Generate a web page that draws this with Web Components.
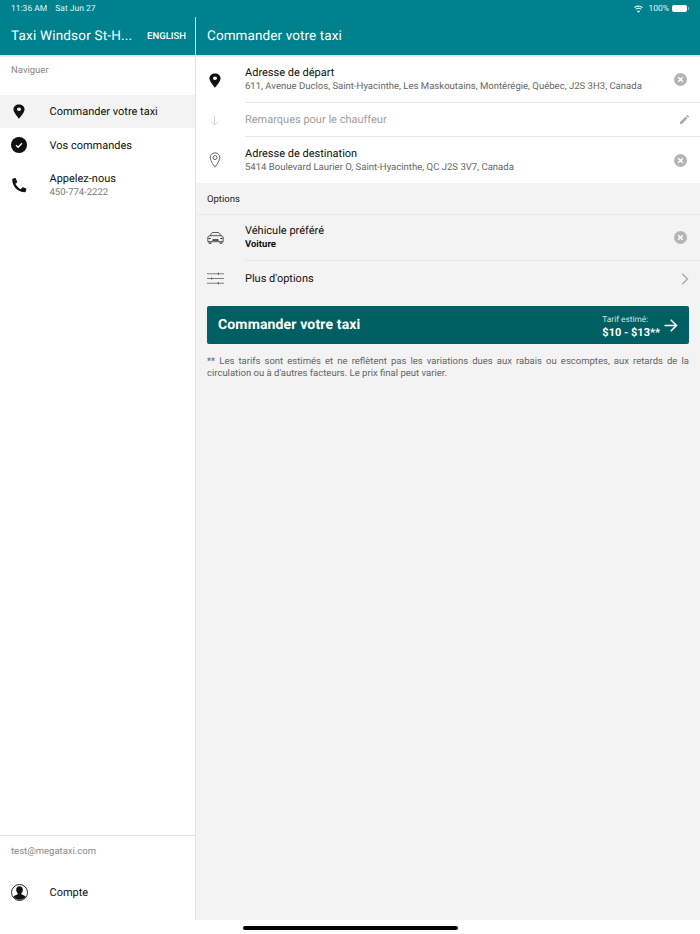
<!DOCTYPE html>
<html lang="fr">
<head>
<meta charset="utf-8">
<title>Commander votre taxi</title>
<style>
    html, body {
        margin: 0;
        height: 100%;
        background: #fff;
        font-family: Roboto, "Liberation Sans", sans-serif;
        text-rendering: geometricPrecision;
    }
</style>
</head>
<body>
<taxi-app></taxi-app>

<template id="taxi-icons">
    <svg data-icon="pin-solid" viewBox="0 0 14 20" preserveAspectRatio="none"><path fill="currentColor" fill-rule="evenodd" d="M7 .5C3.300 .5.500 3.300.500 6.900c0 4.600 6.500 12.600 6.500 12.600s6.500-8 6.500-12.600C13.500 3.300 10.700.5 7 .5zm0 8.800a2.400 2.400 0 1 1 0-4.800 2.400 2.400 0 0 1 0 4.800z"/></svg>
    <svg data-icon="pin-line" viewBox="0 0 14 20"><path fill="none" stroke="currentColor" stroke-width="1" d="M7 1C3.700 1 1 3.600 1 6.900c0 4 6 12 6 12s6-8 6-12C13 3.600 10.300 1 7 1z"/><circle cx="7" cy="7" r="2.500" fill="none" stroke="currentColor" stroke-width="1"/></svg>
    <svg data-icon="check" viewBox="0 0 16 16"><circle cx="8" cy="8" r="8" fill="currentColor"/><path fill="none" stroke="#fff" stroke-width="1.300" d="M5 8.300l2.100 2L11 6.200"/></svg>
    <svg data-icon="phone" viewBox="0 0 16 16"><path fill="currentColor" d="M3.200 .6L.7 1.300C.4 1.400.2 1.700.2 2c.1 3.600 1.500 7 3.900 9.600 2.600 2.500 6 3.900 9.800 4.100.3 0 .6-.2.700-.5l.7-2.600c.1-.3-.1-.7-.4-.8l-3.200-1.300c-.3-.1-.6 0-.8.200l-1.500 1.700C7 11.300 4.700 9 3.600 6.700l1.700-1.400c.2-.2.300-.5.200-.8L4.100 1c-.1-.3-.5-.5-.9-.4z"/></svg>
    <svg data-icon="account" viewBox="0 0 17 17"><circle cx="8.500" cy="8.500" r="8" fill="none" stroke="currentColor" stroke-width=".9"/><path fill="currentColor" d="M8.500 2.300c-2 0-3.300 1.500-3.300 3.500 0 1.400.5 2.700 1.500 3.500v1l-3.300 1.400c-.5.300-.8.600-1 1a7.500 7.500 0 0 0 12.200 0c-.2-.4-.5-.7-1-1l-3.300-1.400v-1c1-.8 1.500-2.100 1.500-3.500 0-2-1.300-3.500-3.300-3.500z"/></svg>
    <svg data-icon="down" viewBox="0 0 10 12"><path fill="none" stroke="currentColor" stroke-width=".9" d="M5 .5v10.500M1.200 7.200L5 11l3.800-3.800"/></svg>
    <svg data-icon="clear" viewBox="0 0 13 13"><circle cx="6.500" cy="6.500" r="6.500" fill="currentColor"/><path fill="none" stroke="#fff" stroke-width="1.500" d="M4.200 4.200l4.600 4.600M8.800 4.200L4.200 8.800"/></svg>
    <svg data-icon="pencil" viewBox="0 0 10 10"><path fill="currentColor" d="M0 10V7.900L6.200 1.700l2.100 2.100L2.100 10zM6.900 1l.8-.8c.3-.3.700-.3 1 0l1.100 1.100c.3.300.3.700 0 1l-.8.800z"/></svg>
    <svg data-icon="car" viewBox="0 0 18 13"><g fill="none" stroke="currentColor" stroke-width=".8"><path d="M.7 5.700c0-.7.500-1.100 1.200-1.300l1.300-.4L4.600 1.500C5 .9 5.500.6 6.200.6h5.600c.7 0 1.200.3 1.600.9L14.800 4l1.300.4c.7.200 1.200.6 1.200 1.300v4.800H.7z"/><path d="M3.200 4h11.600M2 10.500v1.900h2.200v-1.900M13.800 10.500v1.900H16v-1.900"/></g><path fill="currentColor" d="M6 7.800h6l.6 1.600H5.400zM1.500 6.200l2.300.6v.7H1.500zM16.500 6.200l-2.300.6v.7h2.300z"/></svg>
    <svg data-icon="sliders" viewBox="0 0 18 13"><g fill="none" stroke="currentColor" stroke-width=".7"><path d="M0 1.500h18M0 6.500h18M0 11.500h18"/></g><path fill="currentColor" d="M11.500 .4h1v2.200h-1zM4.500 5.400h1v2.200h-1zM11.500 10.400h1v2.200h-1z"/></svg>
    <svg data-icon="chevron" viewBox="0 0 8 13"><path fill="none" stroke="currentColor" stroke-width="1.500" d="M1 .8l5.700 5.700L1 12.200"/></svg>
    <svg data-icon="arrow" viewBox="0 0 13 13"><path fill="none" stroke="currentColor" stroke-width="1.500" d="M0 6.500h12M6.200.8L12 6.500l-5.800 5.700"/></svg>
    <svg data-icon="wifi" viewBox="0 0 12 9"><path fill="currentColor" d="M6 1.900c1.600 0 3 .6 4.100 1.600l.9-.9A7.300 7.300 0 0 0 6 .6C4.100.6 2.300 1.300 1 2.600l.9.900A6 6 0 0 1 6 1.900zM6 4.300c1 0 1.900.4 2.500 1l.9-.9A4.900 4.900 0 0 0 6 3c-1.300 0-2.500.5-3.400 1.400l.9.900c.6-.6 1.500-1 2.500-1zM6 8.800l1.800-1.800a2.500 2.500 0 0 0-3.600 0z"/></svg>
</template>

<script type="text/javascript">
    'use strict'

    class TaxiIcon extends HTMLElement {
        constructor () {
            super();
            let shadowRoot = this.attachShadow({mode: 'open'});
            let style = document.createElement('style');
            style.textContent = ':host { display: block; flex: none; line-height: 0; } svg { width: 100%; height: 100%; display: block; }';
            shadowRoot.appendChild(style);
        }

        connectedCallback () {
            const source = document.querySelector('#taxi-icons').content
                .querySelector('[data-icon="' + this.getAttribute('name') + '"]');
            this.shadowRoot.appendChild(source.cloneNode(true));
        }
    }
    customElements.define('taxi-icon', TaxiIcon);

    class TaxiStatusBar extends HTMLElement {
        constructor () {
            super();
            this.attachShadow({mode: 'open'}).innerHTML = `
                <style>
                    :host {
                        display: flex;
                        align-items: center;
                        justify-content: space-between;
                        height: 17px;
                        padding: 0 11px 0 11px;
                        font-size: 8.500px;
                        color: #e6f2f3;
                    }
                    .left { display: flex; gap: 8px; }
                    .right { display: flex; align-items: center; gap: 3px; }
                    taxi-icon { width: 11px; height: 8px; margin-right: 1px; }
                    .battery {
                        width: 15px;
                        height: 7px;
                        box-sizing: border-box;
                        border: 1px solid rgba(255,255,255,.55);
                        border-radius: 2px;
                        background: #fff;
                    }
                    .nub { width: 1px; height: 3px; margin-left: -2px; background: rgba(255,255,255,.5); }
                </style>
                <div class="left"><span>11:36 AM</span><span>Sat Jun 27</span></div>
                <div class="right">
                    <taxi-icon name="wifi"></taxi-icon>
                    <span>100%</span>
                    <div class="battery"></div><div class="nub"></div>
                </div>`;
        }
    }
    customElements.define('taxi-status-bar', TaxiStatusBar);

    class TaxiHeader extends HTMLElement {
        constructor () {
            super();
            this.attachShadow({mode: 'open'}).innerHTML = `
                <style>
                    :host {
                        display: block;
                        background: #00818e;
                        color: #fff;
                        box-shadow: 0 1px 0 #cfe6e9, 0 2px 0 #e9e9e9;
                        position: relative;
                    }
                    .bar { display: flex; height: 38px; }
                    .side {
                        width: 175px;
                        display: flex;
                        align-items: center;
                        justify-content: space-between;
                        padding: 0 9px 0 11px;
                        border-right: 1px solid #bfdfe2;
                        flex: none;
                    }
                    .title { font-size: 13.500px; letter-spacing: .1px; white-space: nowrap; }
                    .side .title { letter-spacing: .2px; }
                    .lang { font-size: 9.500px; font-weight: 500; }
                    .main { padding-left: 11px; display: flex; align-items: center; }
                </style>
                <taxi-status-bar></taxi-status-bar>
                <div class="bar">
                    <div class="side"><span class="title">Taxi Windsor St-H...</span><span class="lang">ENGLISH</span></div>
                    <div class="main"><span class="title">Commander votre taxi</span></div>
                </div>`;
        }
    }
    customElements.define('taxi-header', TaxiHeader);

    class TaxiNavItem extends HTMLElement {
        constructor () {
            super();
            this.attachShadow({mode: 'open'}).innerHTML = `
                <style>
                    :host {
                        display: flex;
                        align-items: center;
                        min-height: 33px;
                        padding-left: 11px;
                        font-size: 11px;
                        color: #111;
                        line-height: 14px;
                    }
                    :host([active]) { background: #f3f3f3; }
                    .icon { width: 38.500px; flex: none; display: flex; }
                    .text { position: relative; top: var(--text-shift, 0); }
                    ::slotted(small) { display: block; font-size: 9.500px; color: #777; line-height: 13px; }
                </style>
                <div class="icon"><slot name="icon"></slot></div>
                <div class="text"><slot></slot></div>`;
        }
    }
    customElements.define('taxi-nav-item', TaxiNavItem);

    class TaxiSidebar extends HTMLElement {
        constructor () {
            super();
            this.attachShadow({mode: 'open'}).innerHTML = `
                <style>
                    :host {
                        display: flex;
                        flex-direction: column;
                        width: 195px;
                        flex: none;
                        background: #fff;
                        border-right: 1px solid #e3e3e3;
                    }
                    .caption { font-size: 9.500px; color: #888; padding: 8px 11px 9px; line-height: 12px; }
                    nav { margin-top: 9px; flex: 1; }
                    .foot { border-top: 1px solid #e3e3e3; height: 84px; }
                    .foot .caption { padding-top: 10px; }
                    .account { margin-top: 9px; }
                    .call { min-height: 48px; }
                    .orders { --text-shift: 1px; }
                </style>
                <div class="caption">Naviguer</div>
                <nav>
                    <taxi-nav-item active>
                        <taxi-icon slot="icon" name="pin-solid" style="width:12px;height:15px;margin-left:2px"></taxi-icon>
                        Commander votre taxi
                    </taxi-nav-item>
                    <taxi-nav-item class="orders">
                        <taxi-icon slot="icon" name="check" style="width:16px;height:16px"></taxi-icon>
                        Vos commandes
                    </taxi-nav-item>
                    <taxi-nav-item class="call">
                        <taxi-icon slot="icon" name="phone" style="width:15px;height:16px;margin-left:1px"></taxi-icon>
                        Appelez-nous
                        <small>450-774-2222</small>
                    </taxi-nav-item>
                </nav>
                <div class="foot">
                    <div class="caption">test@megataxi.com</div>
                    <taxi-nav-item class="account">
                        <taxi-icon slot="icon" name="account" style="width:17px;height:17px"></taxi-icon>
                        Compte
                    </taxi-nav-item>
                </div>`;
        }
    }
    customElements.define('taxi-sidebar', TaxiSidebar);

    class TaxiRow extends HTMLElement {
        constructor () {
            super();
            this.attachShadow({mode: 'open'}).innerHTML = `
                <style>
                    :host {
                        display: flex;
                        align-items: stretch;
                        padding-left: 11px;
                        font-size: 11px;
                        line-height: 13.500px;
                        color: #111;
                    }
                    .icon { width: 38px; flex: none; display: flex; align-items: center; }
                    .body {
                        flex: 1;
                        min-height: 45px;
                        display: flex;
                        align-items: center;
                        justify-content: space-between;
                        padding-right: 11px;
                        border-bottom: 1px solid #e6e6e6;
                    }
                    :host([compact]) .body { min-height: 33px; }
                    :host([last]) .body { border-bottom: 0; min-height: 45px; padding-top: 1px; }
                    :host([compact][last]) .body { min-height: 33px; }
                    ::slotted(small) { display: block; font-size: 9.550px; line-height: 13.500px; color: #666; }
                    ::slotted(b) { display: block; font-size: 9.500px; line-height: 13.500px; font-weight: 700; }
                    :host([muted]) { color: #a0a0a0; }
                </style>
                <div class="icon"><slot name="icon"></slot></div>
                <div class="body">
                    <div><slot></slot></div>
                    <slot name="action"></slot>
                </div>`;
        }
    }
    customElements.define('taxi-row', TaxiRow);

    class TaxiOrderButton extends HTMLElement {
        constructor () {
            super();
            this.attachShadow({mode: 'open'}).innerHTML = `
                <style>
                    :host {
                        display: flex;
                        align-items: center;
                        justify-content: space-between;
                        height: 38px;
                        margin: 0 11px;
                        padding: 0 11px;
                        border-radius: 2px;
                        background: #005f62;
                        color: #fff;
                    }
                    .label { font-size: 14px; font-weight: 700; letter-spacing: .15px; }
                    .right { display: flex; align-items: center; gap: 4px; }
                    .fare { font-size: 8.300px; line-height: 11px; color: #cfe3e3; padding-top: 4px; }
                    .fare b { display: block; font-size: 11px; line-height: 13px; color: #fff; font-weight: 700; }
                    taxi-icon { width: 14px; height: 13px; }
                </style>
                <span class="label">Commander votre taxi</span>
                <div class="right">
                    <div class="fare">Tarif estimé:<b>$10 - $13**</b></div>
                    <taxi-icon name="arrow"></taxi-icon>
                </div>`;
        }
    }
    customElements.define('taxi-order-button', TaxiOrderButton);

    class TaxiOrderForm extends HTMLElement {
        constructor () {
            super();
            this.attachShadow({mode: 'open'}).innerHTML = `
                <style>
                    :host { display: block; flex: 1; min-width: 0; background: #f3f3f3; }
                    .addresses { background: #fff; }
                    .clear { width: 13px; height: 13px; color: #b4b4b4; margin-right: 2px; }
                    .pencil { width: 9px; height: 9px; color: #aaa; }
                    .section {
                        font-size: 9.500px;
                        line-height: 29px;
                        height: 29px;
                        padding: 2px 0 0 11px;
                        color: #222;
                        border-bottom: 1px solid #e8e8e8;
                    }
                    .note {
                        margin: 12px 11px 0;
                        font-size: 9.500px;
                        line-height: 12px;
                        color: #666;
                        text-align: justify;
                    }
                    taxi-order-button { margin-top: 11px; }
                </style>
                <div class="addresses">
                    <taxi-row>
                        <taxi-icon slot="icon" name="pin-solid" style="width:12px;height:15px;margin-left:2px"></taxi-icon>
                        Adresse de départ
                        <small>611, Avenue Duclos, Saint-Hyacinthe, Les Maskoutains, Montérégie, Québec, J2S 3H3, Canada</small>
                        <taxi-icon slot="action" class="clear" name="clear"></taxi-icon>
                    </taxi-row>
                    <taxi-row muted compact>
                        <taxi-icon slot="icon" name="down" style="width:9px;height:11px;margin-left:3px;color:#c8c8c8"></taxi-icon>
                        Remarques pour le chauffeur
                        <taxi-icon slot="action" class="pencil" name="pencil"></taxi-icon>
                    </taxi-row>
                    <taxi-row last>
                        <taxi-icon slot="icon" name="pin-line" style="width:14px;height:16px;margin-left:1px;color:#444"></taxi-icon>
                        Adresse de destination
                        <small>5414 Boulevard Laurier O, Saint-Hyacinthe, QC J2S 3V7, Canada</small>
                        <taxi-icon slot="action" class="clear" name="clear"></taxi-icon>
                    </taxi-row>
                </div>
                <div class="section">Options</div>
                <taxi-row>
                    <taxi-icon slot="icon" name="car" style="width:17px;height:12px;color:#222"></taxi-icon>
                    Véhicule préféré
                    <b>Voiture</b>
                    <taxi-icon slot="action" class="clear" name="clear"></taxi-icon>
                </taxi-row>
                <taxi-row last compact>
                    <taxi-icon slot="icon" name="sliders" style="width:17px;height:13px;color:#444"></taxi-icon>
                    Plus d'options
                    <taxi-icon slot="action" name="chevron" style="width:8px;height:12px;color:#aaa"></taxi-icon>
                </taxi-row>
                <taxi-order-button></taxi-order-button>
                <p class="note">** Les tarifs sont estimés et ne reflètent pas les variations dues aux rabais ou escomptes, aux retards de la circulation ou à d'autres facteurs. Le prix final peut varier.</p>`;
        }
    }
    customElements.define('taxi-order-form', TaxiOrderForm);

    class TaxiApp extends HTMLElement {
        constructor () {
            super();
            this.attachShadow({mode: 'open'}).innerHTML = `
                <style>
                    :host { display: flex; flex-direction: column; height: 934px; background: #fff; }
                    .content { flex: 1; display: flex; min-height: 0; padding-top: 2px; background: #fff; }
                    .home { height: 14px; flex: none; display: flex; justify-content: center; align-items: center; }
                    .home i { width: 215px; height: 4px; border-radius: 2px; background: #000; display: block; margin-top: 2px; }
                </style>
                <taxi-header></taxi-header>
                <div class="content">
                    <taxi-sidebar></taxi-sidebar>
                    <taxi-order-form></taxi-order-form>
                </div>
                <div class="home"><i></i></div>`;
        }
    }
    customElements.define('taxi-app', TaxiApp);
</script>
</body>
</html>
